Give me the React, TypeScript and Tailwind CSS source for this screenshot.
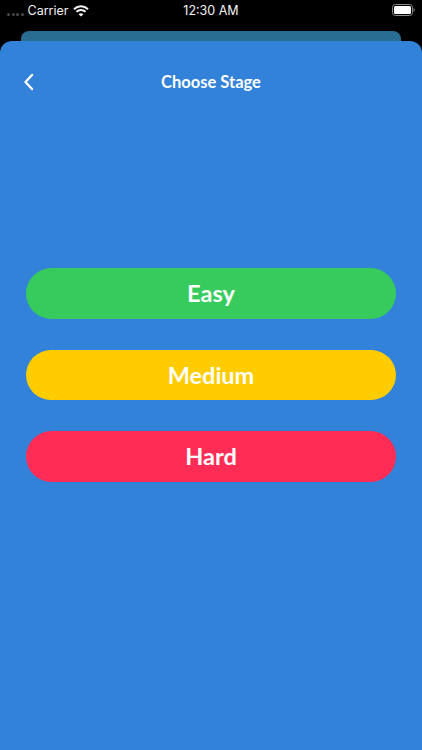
export default function App() {
  const stages = [
    { label: "Easy", bg: "bg-[#37cb5d]" },
    { label: "Medium", bg: "bg-[#ffcc00]" },
    { label: "Hard", bg: "bg-[#ff2d55]" },
  ];
  return (
    <div className="h-[750px] w-[422px] overflow-hidden bg-black flex flex-col font-['Lato',sans-serif] text-white">
      <div className="h-[31px] shrink-0 relative flex items-start justify-between pl-[7px] pr-[7px] pt-[3px] font-['Inter',sans-serif] text-[12.5px] leading-[16px] text-[#f2f2f2]">
        <div className="flex items-center h-[16px]">
          <div className="flex gap-[1.5px] mt-[6px] mr-[4px]">
            {[0, 1, 2, 3].map((i) => (
              <span key={i} className="w-[3px] h-[3px] rounded-full bg-[#4a4a4a]" />
            ))}
          </div>
          <span className="w-[39px]">Carrier</span>
          <svg className="ml-[6px]" width="16" height="12" viewBox="0 0 16 12" fill="none" stroke="#f2f2f2" strokeWidth="2">
            <path d="M1 4.2C5 .4 11 .4 15 4.2" />
            <path d="M3.4 6.8C6 4.4 10 4.4 12.6 6.8" />
            <path d="M8 11.5 5.6 9.2C7 8 9 8 10.4 9.2Z" fill="#f2f2f2" stroke="none" />
          </svg>
        </div>
        <span className="absolute left-0 right-0 text-center">12:30 AM</span>
        <svg width="23" height="12" viewBox="0 0 23 12" className="mt-[1px]">
          <rect x="0.5" y="0.5" width="20" height="11" rx="3" fill="none" stroke="#8a8a8a" />
          <rect x="2" y="2" width="17" height="8" rx="1.5" fill="#ffffff" />
          <path d="M21.5 4v4c.8-.3 1.2-1 1.2-2s-.4-1.700-1.200-2Z" fill="#777777" />
        </svg>
      </div>
      <div className="h-[10px] shrink-0 mx-[21px] rounded-t-[8px] bg-[#2a6d93]" />
      <div className="flex-1 rounded-t-[12px] bg-[#3282da] flex flex-col">
        <div className="relative h-[20px] mt-[31px] flex items-center justify-center">
          <svg className="absolute left-[23px] top-[1px]" width="11" height="18" viewBox="0 0 11 18" fill="none" stroke="#ffffff" strokeWidth="2.4" strokeLinecap="round" strokeLinejoin="round">
            <path d="M9 2 2.500 9 9 16" />
          </svg>
          <span className="text-[16.500px] font-bold leading-[20px] -mt-[1px]">Choose Stage</span>
        </div>
        <div className="mt-[176px] mx-[26px] flex flex-col gap-[31px]">
          {stages.map((s) => (
            <div key={s.label} className={`${s.bg} h-[50.500px] pt-[1px] rounded-full flex items-center justify-center text-[23.500px] font-bold`}>
              {s.label}
            </div>
          ))}
        </div>
      </div>
    </div>
  );
}
